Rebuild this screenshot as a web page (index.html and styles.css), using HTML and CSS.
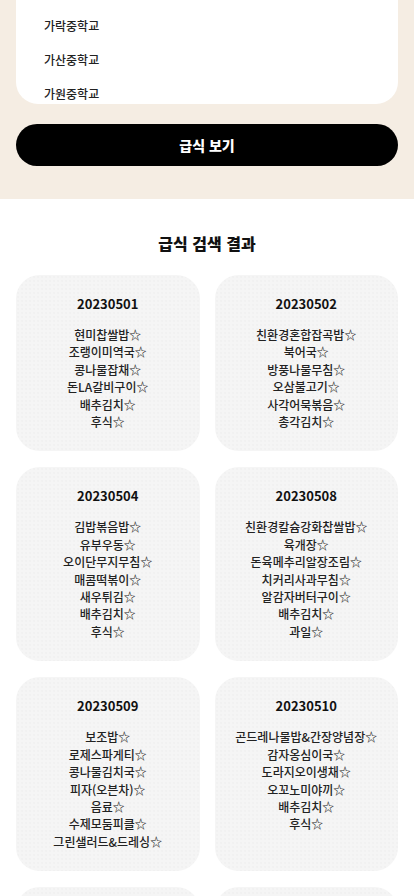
FILE: index.html
```html
<!DOCTYPE html>
<html lang="ko">
<head>
<meta charset="utf-8">
<meta name="viewport" content="width=device-width, initial-scale=1">
<title>급식 검색</title>
<link rel="stylesheet" href="styles.css">
</head>
<body>
<section class="search">
  <ul class="school-list">
    <li>가락중학교</li>
    <li>가산중학교</li>
    <li>가원중학교</li>
  </ul>
  <button class="submit" type="button">급식 보기</button>
</section>
<section class="results">
  <h2 class="results-title">급식 검색 결과</h2>
  <div class="grid">
    <article class="card">
      <h3 class="date">20230501</h3>
      <ul class="menu"><li>현미찹쌀밥☆</li><li>조랭이미역국☆</li><li>콩나물잡채☆</li><li>돈LA갈비구이☆</li><li>배추김치☆</li><li>후식☆</li></ul>
    </article>
    <article class="card">
      <h3 class="date">20230502</h3>
      <ul class="menu"><li>친환경혼합잡곡밥☆</li><li>북어국☆</li><li>방풍나물무침☆</li><li>오삼불고기☆</li><li>사각어묵볶음☆</li><li>총각김치☆</li></ul>
    </article>
    <article class="card">
      <h3 class="date">20230504</h3>
      <ul class="menu"><li>김밥볶음밥☆</li><li>유부우동☆</li><li>오이단무지무침☆</li><li>매콤떡볶이☆</li><li>새우튀김☆</li><li>배추김치☆</li><li>후식☆</li></ul>
    </article>
    <article class="card">
      <h3 class="date">20230508</h3>
      <ul class="menu"><li>친환경칼슘강화찹쌀밥☆</li><li>육개장☆</li><li>돈육메추리알장조림☆</li><li>치커리사과무침☆</li><li>알감자버터구이☆</li><li>배추김치☆</li><li>과일☆</li></ul>
    </article>
    <article class="card">
      <h3 class="date">20230509</h3>
      <ul class="menu"><li>보조밥☆</li><li>로제스파게티☆</li><li>콩나물김치국☆</li><li>피자(오븐차)☆</li><li>음료☆</li><li>수제모둠피클☆</li><li>그린샐러드&amp;드레싱☆</li></ul>
    </article>
    <article class="card">
      <h3 class="date">20230510</h3>
      <ul class="menu"><li>곤드레나물밥&amp;간장양념장☆</li><li>감자옹심이국☆</li><li>도라지오이생채☆</li><li>오꼬노미야끼☆</li><li>배추김치☆</li><li>후식☆</li></ul>
    </article>
    <article class="card card-empty"></article>
    <article class="card card-empty"></article>
  </div>
</section>
</body>
</html>
```
FILE: styles.css
```css
* { box-sizing: border-box; }
html, body { margin: 0; padding: 0; }
body {
  font-family: "Noto Sans CJK KR", "Noto Sans", sans-serif;
  color: #1f1f1f;
  background: #fff;
}
.search {
  background: #f5ede3;
  padding: 0 16px 33px;
}
.school-list {
  list-style: none;
  margin: 0;
  padding: 9px 28px 0;
  background: #fff;
  border-radius: 0 0 22px 22px;
  height: 104px;
  overflow: hidden;
}
.school-list li {
  font-size: 12px;
  line-height: 34px;
  height: 34px;
  font-weight: 500;
  color: #222;
}
.submit {
  display: block;
  width: 100%;
  height: 42px;
  margin-top: 20px;
  border: 0;
  border-radius: 21px;
  background: #000;
  color: #fff;
  font-family: inherit;
  font-size: 14px;
  font-weight: 800;
  cursor: pointer;
}
.results {
  padding: 32px 16px 0;
}
.results-title {
  margin: 0 0 20px;
  text-align: center;
  font-size: 16px;
  font-weight: 800;
  line-height: 24px;
  color: #111;
}
.grid {
  display: grid;
  grid-template-columns: 1fr 1fr;
  gap: 16px 15px;
}
.card {
  background-color: #f5f5f5;
  background-image: radial-gradient(circle, #ebebeb 0.6px, transparent 0.8px);
  background-size: 4px 4px;
  border-radius: 24px;
  padding: 19px 8px 21px;
  text-align: center;
}
.card-empty {
  min-height: 175px;
}
.date {
  margin: 0 0 12px;
  font-size: 13px;
  line-height: 20px;
  font-weight: 700;
  color: #111;
}
.menu {
  list-style: none;
  margin: 0;
  padding: 0;
}
.menu li {
  font-size: 12px;
  line-height: 17.4px;
  font-weight: 500;
  color: #222;
  white-space: nowrap;
}
```
